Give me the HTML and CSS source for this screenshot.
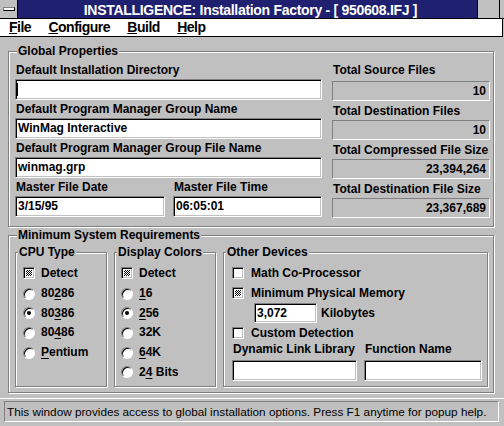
FILE: index.html
```html
<!DOCTYPE html>
<html>
<head>
<meta charset="utf-8">
<link rel="stylesheet" href="styles.css">
</head>
<body>
<div class="window">
  <div class="titlebar">
    <div class="sysmenu"><div class="sysbar"></div></div>
    <div class="title">INSTALLIGENCE: Installation Factory - [ 950608.IFJ ]</div>
    <div class="caption-btn"><div class="btn-a"></div><div class="btn-b"></div></div>
  </div>
  <div class="menubar">
    <span><u>F</u>ile</span>
    <span><u>C</u>onfigure</span>
    <span><u>B</u>uild</span>
    <span><u>H</u>elp</span>
  </div>
  <div class="client">
    <div class="group global">
      <div class="group-title">Global Properties</div>
      <div class="global-body">
        <div class="col-left">
          <div class="field">
            <div class="label">Default Installation Directory</div>
            <div class="edit"><span class="caret"></span></div>
          </div>
          <div class="field">
            <div class="label">Default Program Manager Group Name</div>
            <div class="edit">WinMag Interactive</div>
          </div>
          <div class="field">
            <div class="label">Default Program Manager Group File Name</div>
            <div class="edit">winmag.grp</div>
          </div>
          <div class="field-row">
            <div class="field date">
              <div class="label">Master File Date</div>
              <div class="edit">3/15/95</div>
            </div>
            <div class="field time">
              <div class="label">Master File Time</div>
              <div class="edit">06:05:01</div>
            </div>
          </div>
        </div>
        <div class="col-right">
          <div class="field">
            <div class="label first">Total Source Files</div>
            <div class="readout">10</div>
          </div>
          <div class="field">
            <div class="label">Total Destination Files</div>
            <div class="readout">10</div>
          </div>
          <div class="field">
            <div class="label">Total Compressed File Size</div>
            <div class="readout">23,394,264</div>
          </div>
          <div class="field">
            <div class="label">Total Destination File Size</div>
            <div class="readout">23,367,689</div>
          </div>
        </div>
      </div>
    </div>

    <div class="group minsys">
      <div class="group-title">Minimum System Requirements</div>
      <div class="sub-row">
        <div class="sub cpu">
          <div class="sub-title">CPU Type</div>
          <div class="opts">
            <div class="opt detect"><span class="check mixed"></span><span>Detect</span></div>
            <div class="opt"><span class="radio"></span><span>80<u>2</u>86</span></div>
            <div class="opt"><span class="radio on"></span><span>80<u>3</u>86</span></div>
            <div class="opt"><span class="radio"></span><span>80<u>4</u>86</span></div>
            <div class="opt"><span class="radio"></span><span><u>P</u>entium</span></div>
          </div>
        </div>
        <div class="sub colors">
          <div class="sub-title">Display Colors</div>
          <div class="opts">
            <div class="opt detect"><span class="check mixed"></span><span>Detect</span></div>
            <div class="opt"><span class="radio"></span><span><u>1</u>6</span></div>
            <div class="opt"><span class="radio on"></span><span><u>2</u>56</span></div>
            <div class="opt"><span class="radio"></span><span>32K</span></div>
            <div class="opt"><span class="radio"></span><span><u>6</u>4K</span></div>
            <div class="opt"><span class="radio"></span><span>2<u>4</u> Bits</span></div>
          </div>
        </div>
        <div class="sub other">
          <div class="sub-title">Other Devices</div>
          <div class="other-body">
            <div class="orow"><span class="check"></span><span>Math Co-Processor</span></div>
            <div class="orow"><span class="check mixed"></span><span>Minimum Physical Memory</span></div>
            <div class="orow mem"><div class="edit mem-edit">3,072</div><span>Kilobytes</span></div>
            <div class="orow"><span class="check"></span><span>Custom Detection</span></div>
            <div class="dll-grid">
              <div class="label">Dynamic Link Library</div>
              <div class="label">Function Name</div>
              <div class="edit"></div>
              <div class="edit"></div>
            </div>
          </div>
        </div>
      </div>
    </div>
  </div>
  <div class="status">
    <div class="status-field">This window provides access to global installation options. Press F1 anytime for popup help.</div>
  </div>
</div>
</body>
</html>
```

FILE: styles.css
```css
* { box-sizing: border-box; }
html, body { margin: 0; padding: 0; }
body {
  width: 504px;
  height: 426px;
  overflow: hidden;
  background: #c0c0c0;
  font-family: "Liberation Sans", Arial, sans-serif;
  color: #000;
}
u {
  text-decoration-thickness: 1px;
  text-underline-offset: 2px;
}

/* title bar */
.titlebar {
  display: flex;
  height: 19px;
  border-bottom: 1px solid #000;
}
.sysmenu {
  width: 18px;
  border-right: 1px solid #000;
  background: #c0c0c0;
  padding: 7px 0 0 3px;
}
.sysbar {
  width: 12px;
  height: 4px;
  background: #fff;
  border: 1px solid #000;
  border-top-color: #808080;
  border-left-color: #808080;
}
.title {
  flex: 1;
  background: #202070;
  color: #fff;
  font-weight: bold;
  font-size: 14px;
  letter-spacing: -0.3px;
  line-height: 15px;
  padding: 3px 0 0 6px;
  text-align: center;
  white-space: nowrap;
}
.caption-btn {
  width: 27px;
  border-left: 1px solid #000;
  display: flex;
  background: #c0c0c0;
}
.btn-a {
  width: 22px;
  border-right: 1px solid #000;
}

/* menu bar */
.menubar {
  display: flex;
  gap: 17.3px;
  height: 18px;
  padding-left: 9px;
  margin-right: 1px;
  background: #fff;
  border-bottom: 1px solid #000;
  border-right: 1px solid #000;
  font-size: 14px;
  font-weight: bold;
  letter-spacing: -0.5px;
  line-height: 17px;
}
.menubar u { text-underline-offset: 1px; }

/* client */
.client {
  padding: 14px 0 5px 8px;
}
.group {
  width: 486px;
  border: 1px solid #808080;
  box-shadow: inset 1px 1px 0 #fff, 1px 1px 0 #fff;
}
.group-title, .sub-title {
  margin: -7px 0 0 2px;
  width: fit-content;
  padding: 0 1px;
  background: #c0c0c0;
  font-size: 12px;
  font-weight: bold;
  line-height: 13px;
  white-space: nowrap;
}
.global {
  padding: 0 3px 8px 6px;
}
.global-body {
  margin-top: 6px;
  display: grid;
  grid-template-columns: 307px 158px;
  column-gap: 10px;
  align-items: start;
}
.col-left {
  display: flex;
  flex-direction: column;
  gap: 3px;
}
.col-right {
  display: flex;
  flex-direction: column;
  gap: 4px;
}
.label {
  font-size: 12px;
  font-weight: bold;
  line-height: 13px;
  padding-left: 1px;
  margin-bottom: 2px;
  white-space: nowrap;
}
.label.first { margin-bottom: 4px; }
.edit {
  height: 21px;
  background: #fff;
  border: 1px solid;
  border-color: #808080 #fff #fff #808080;
  box-shadow: inset 1px 1px 0 #000, inset -1px -1px 0 #c0c0c0;
  padding-left: 2px;
  display: flex;
  align-items: center;
  font-size: 12px;
  font-weight: bold;
  line-height: 19px;
  white-space: nowrap;
}
.caret {
  width: 1px;
  height: 13px;
  margin-left: -1px;
  background: #000;
}
.field-row {
  display: flex;
  gap: 8px;
}
.field.date { width: 150px; }
.field.time { flex: 1; }
.readout {
  height: 20px;
  border: 1px solid;
  border-color: #808080 #fff #fff #808080;
  padding-right: 3px;
  text-align: right;
  font-size: 12px;
  font-weight: bold;
  line-height: 18px;
}

/* minimum system requirements */
.minsys {
  margin-top: 8px;
  padding: 0 5px 5px 6px;
}
.sub-row {
  margin-top: 10px;
  display: flex;
  gap: 7px;
}
.sub {
  height: 135px;
  border: 1px solid #808080;
  box-shadow: inset 1px 1px 0 #fff, 1px 1px 0 #fff;
}
.sub.cpu { width: 92px; }
.sub.colors { width: 102px; }
.sub.other { width: 265px; }
.opts {
  padding: 4px 0 0 7px;
  font-size: 12px;
  font-weight: bold;
  line-height: 13px;
}
.sub.colors .opts { padding-left: 6px; }
.opt {
  height: 19.6px;
  display: flex;
  align-items: center;
  gap: 6px;
  white-space: nowrap;
}
.opt.detect {
  height: 20px;
  margin-bottom: 1px;
}
.radio {
  width: 12px;
  height: 12px;
  flex: none;
  border-radius: 50%;
  background: #fff;
  border: 1px solid;
  border-color: #808080 #fff #fff #808080;
  box-shadow: inset 1px 1px 0 #000;
  display: flex;
  align-items: center;
  justify-content: center;
}
.radio.on::after {
  content: "";
  width: 4px;
  height: 4px;
  border-radius: 50%;
  background: #000;
}
.check {
  width: 12px;
  height: 12px;
  flex: none;
  border: 1px solid;
  border-color: #808080 #fff #fff #808080;
  box-shadow: inset 1px 1px 0 #000, inset -1px -1px 0 #c0c0c0;
  background: #fff;
}
.check.mixed {
  padding: 2px;
  background: repeating-conic-gradient(#000 0 25%, #fff 0 50%) content-box 0 0 / 2px 2px, #fff;
}

/* other devices */
.other-body {
  padding: 4px 4px 0 8px;
  font-size: 12px;
  font-weight: bold;
  line-height: 13px;
}
.orow {
  height: 20px;
  display: flex;
  align-items: center;
  gap: 7px;
  white-space: nowrap;
}
.orow.mem {
  padding-left: 22px;
  gap: 4px;
}
.mem-edit {
  width: 63px;
  height: 20px;
}
.dll-grid {
  display: grid;
  grid-template-columns: 125px 118px;
  column-gap: 7px;
}
.dll-grid .label { margin-bottom: 4px; }

/* status bar */
.status {
  border-top: 1px solid #fff;
  padding: 2px 0 0 4px;
}
.status-field {
  width: 495px;
  height: 21px;
  border: 1px solid;
  border-color: #808080 #fff #fff #808080;
  padding-left: 2px;
  font-size: 11.75px;
  line-height: 19px;
  white-space: nowrap;
}
```
